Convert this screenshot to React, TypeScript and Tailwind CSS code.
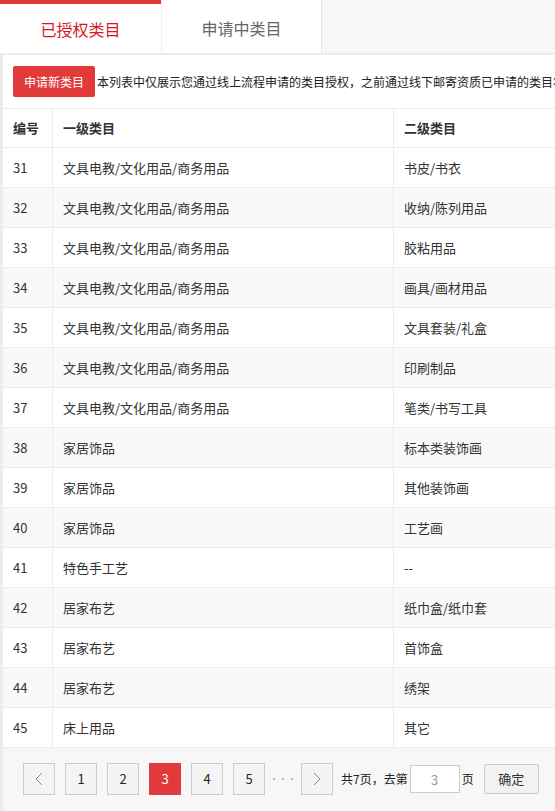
import React from "react";

const rows: [number, string, string][] = [
  [31, "文具电教/文化用品/商务用品", "书皮/书衣"],
  [32, "文具电教/文化用品/商务用品", "收纳/陈列用品"],
  [33, "文具电教/文化用品/商务用品", "胶粘用品"],
  [34, "文具电教/文化用品/商务用品", "画具/画材用品"],
  [35, "文具电教/文化用品/商务用品", "文具套装/礼盒"],
  [36, "文具电教/文化用品/商务用品", "印刷制品"],
  [37, "文具电教/文化用品/商务用品", "笔类/书写工具"],
  [38, "家居饰品", "标本类装饰画"],
  [39, "家居饰品", "其他装饰画"],
  [40, "家居饰品", "工艺画"],
  [41, "特色手工艺", "--"],
  [42, "居家布艺", "纸巾盒/纸巾套"],
  [43, "居家布艺", "首饰盒"],
  [44, "居家布艺", "绣架"],
  [45, "床上用品", "其它"],
];

function Chevron({ dir }: { dir: "left" | "right" }) {
  return (
    <svg width="8" height="14" viewBox="0 0 8 14" fill="none">
      {dir === "left" ? (
        <path d="M7 1L1 7L7 13" stroke="#6f8fbf" strokeWidth="1" />
      ) : (
        <path d="M1 1L7 7L1 13" stroke="#6f8fbf" strokeWidth="1" />
      )}
    </svg>
  );
}

export default function App() {
  return (
    <div className="w-[555px] h-[811px] overflow-hidden bg-white font-['Noto_Sans_CJK_SC','Microsoft_YaHei',sans-serif] text-[#333]">
      {/* Tabs */}
      <div className="flex h-[55px] border-b-2 border-[#ececec] bg-[#f7f7f7]">
        <div className="w-[161px] shrink-0 bg-white border-t-4 border-[#e2393a] flex items-center justify-center text-[16px] text-[#d4161f]">
          已授权类目
        </div>
        <div className="w-[161px] shrink-0 bg-white border-l border-[#eeeeee] border-r border-r-[#e6e6e6] flex items-center justify-center text-[16px] text-[#666] pt-[3px]">
          申请中类目
        </div>
        <div className="flex-1" />
      </div>

      <div className="border-l-[3px] border-[#ececec] w-[900px]">
        {/* Toolbar */}
        <div className="h-[53px] flex items-center pl-[10px] whitespace-nowrap">
          <button className="h-[31px] w-[82px] rounded-[2px] bg-[#e2393a] text-white text-[12px]">
            申请新类目
          </button>
          <span className="ml-[2px] text-[12px] text-[#222]">
            本列表中仅展示您通过线上流程申请的类目授权，之前通过线下邮寄资质已申请的类目将不在此列表中展示
          </span>
        </div>

        {/* Table */}
        <div>
          <div className="grid grid-cols-[50px_341px_500px] h-[40px] border-t border-b border-[#ececec] text-[13px] font-bold text-[#333]">
            <div className="border-r border-[#ececec] flex items-center pl-[10px]">编号</div>
            <div className="border-r border-[#ececec] flex items-center pl-[10px]">一级类目</div>
            <div className="flex items-center pl-[10px]">二级类目</div>
          </div>
          {rows.map(([id, a, b]) => (
            <div
              key={id}
              className={`grid grid-cols-[50px_341px_500px] h-[40px] border-b border-[#ececec] text-[13px] text-[#333] ${
                id % 2 === 0 ? "bg-[#f9f9f9]" : "bg-white"
              }`}
            >
              <div className="border-r border-[#ececec] flex items-center pl-[10px]">{id}</div>
              <div className="border-r border-[#ececec] flex items-center pl-[10px]">{a}</div>
              <div className="flex items-center pl-[10px]">{b}</div>
            </div>
          ))}
        </div>

        {/* Pagination */}
        <div className="bg-[#f7f7f7] h-[70px] pt-[15px] pl-[20px] flex items-start gap-[10px] text-[13px] whitespace-nowrap">
          <button className="w-[32px] h-[32px] border border-[#cccccc] bg-[#f4f4f4] flex items-center justify-center">
            <Chevron dir="left" />
          </button>
          {[1, 2, 3, 4, 5].map((n) => (
            <button
              key={n}
              className={`w-[32px] h-[32px] flex items-center justify-center text-[13px] ${
                n === 3
                  ? "bg-[#e2393a] text-white border border-[#e2393a]"
                  : "bg-[#f4f4f4] text-[#222] border border-[#cccccc]"
              }`}
            >
              {n}
            </button>
          ))}
          <span className="w-[16px] h-[32px] flex items-center justify-center text-[#aaa] text-[9px]">
            ···
          </span>
          <button className="w-[32px] h-[32px] border border-[#cccccc] bg-[#f4f4f4] flex items-center justify-center">
            <Chevron dir="right" />
          </button>
          <div className="flex items-center h-[32px] -ml-[2px] text-[12px] text-[#222]">
            <span>共7页，去第</span>
            <input
              readOnly
              value="3"
              className="ml-[2px] w-[50px] h-[28px] border border-[#cccccc] bg-white text-center text-[13px] text-[#999] outline-none"
            />
            <span className="ml-[2px]">页</span>
            <button className="ml-[10px] w-[55px] h-[30px] border border-[#cccccc] rounded-[2px] bg-[#f2f2f2] text-[13px] text-[#333]">
              确定
            </button>
          </div>
        </div>
      </div>
    </div>
  );
}
